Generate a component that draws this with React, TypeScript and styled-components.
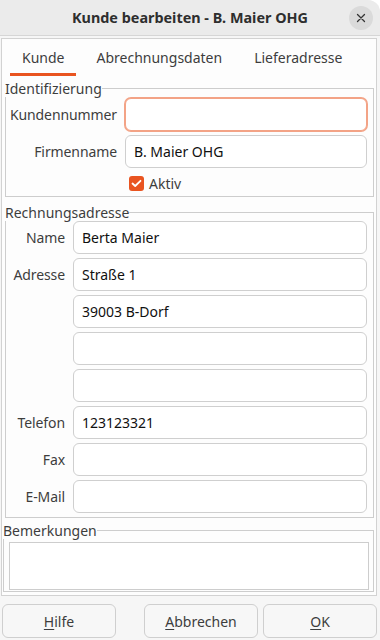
import styled, { createGlobalStyle } from "styled-components";

const GlobalStyle = createGlobalStyle`
  html, body {
    margin: 0;
    padding: 0;
    background: #ffffff;
  }
  body {
    font-family: "Noto Sans", "DejaVu Sans", sans-serif;
    font-size: 14px;
    color: #3d3d3d;
  }
  * {
    box-sizing: border-box;
  }
`;

const Window = styled.div`
  width: 380px;
  height: 640px;
  display: flex;
  flex-direction: column;
  background-color: #f6f6f6;
  border-top-right-radius: 12px;
  overflow: hidden;
`;

const TitleBar = styled.div`
  height: 36px;
  flex-shrink: 0;
  display: grid;
  grid-template-columns: 36px 1fr 36px;
  align-items: center;
  background-color: #ebebeb;
  border-bottom: 1px solid #d6d6d6;
`;

const Title = styled.div`
  grid-column: 2;
  text-align: center;
  font-weight: bold;
  font-size: 14.4px;
  color: #2e2e2e;
`;

const CloseButton = styled.button`
  width: 24px;
  height: 24px;
  padding: 0;
  margin-right: 7px;
  border: none;
  border-radius: 50%;
  background-color: #dadada;
  display: flex;
  align-items: center;
  justify-content: center;
  justify-self: end;
`;

const Body = styled.div`
  flex: 1;
  display: flex;
  flex-direction: column;
  padding: 2px 3px 2px 1px;
`;

const Notebook = styled.div`
  flex: 1;
  display: flex;
  flex-direction: column;
  background-color: #fdfdfd;
  border: 1px solid #d2d2d2;
`;

const TabBar = styled.div`
  height: 37px;
  display: flex;
  gap: 8px;
  padding-left: 8px;
`;

const Tab = styled.div<{ $active?: boolean }>`
  padding: 0 12px;
  display: flex;
  align-items: center;
  color: #3d3d3d;
  border-bottom: 3px solid ${(p) => (p.$active ? "#e95420" : "transparent")};
  padding-top: 3px;
`;

const Page = styled.div`
  flex: 1;
  display: flex;
  flex-direction: column;
  padding: 4px 2px 1px 1px;
`;

const Frame = styled.div<{ $inset: number; $gap: number }>`
  margin-left: ${(p) => p.$inset}px;
  margin-top: ${(p) => p.$gap}px;
  display: flex;
  flex-direction: column;
`;

const FrameHead = styled.div`
  display: flex;
`;

const FrameTitle = styled.span`
  line-height: 17px;
  color: #3d3d3d;
`;

const HeadRule = styled.div`
  flex: 1;
  margin-top: 8px;
  border-top: 1px solid #cdcdcd;
  border-right: 1px solid #cdcdcd;
`;

const FrameBody = styled.div<{ $pad: string }>`
  border: 1px solid #cdcdcd;
  border-top: none;
  padding: ${(p) => p.$pad};
`;

const FormGrid = styled.div<{ $labelWidth: number }>`
  display: grid;
  grid-template-columns: ${(p) => p.$labelWidth}px 1fr;
  column-gap: 8px;
  row-gap: 4px;
  align-items: center;
`;

const Label = styled.label`
  text-align: right;
  color: #3d3d3d;
  white-space: nowrap;
  letter-spacing: -0.1px;
`;

const Input = styled.input<{ $focused?: boolean }>`
  grid-column: 2;
  height: 33px;
  width: 100%;
  padding: 0 8px;
  font-family: inherit;
  font-size: 14px;
  color: #101010;
  background-color: #ffffff;
  border: 1px solid ${(p) => (p.$focused ? "#f3a386" : "#cfcfcf")};
  box-shadow: ${(p) => (p.$focused ? "0 0 0 1px #f3a386" : "none")};
  border-radius: 6px;
  outline: none;
`;

const CheckRow = styled.div`
  grid-column: 2;
  height: 22px;
  display: flex;
  align-items: center;
  gap: 5px;
  padding-left: 4px;
`;

const CheckBox = styled.span`
  width: 15px;
  height: 15px;
  border-radius: 3px;
  background-color: #e95420;
  display: flex;
  align-items: center;
  justify-content: center;
`;

const TextArea = styled.div`
  height: 48px;
  background-color: #ffffff;
  border: 1px solid #cdcdcd;
`;

const ButtonBar = styled.div`
  height: 34px;
  display: flex;
  gap: 5px;
  margin-top: 8px;
  margin-left: 1px;
`;

const Button = styled.button<{ $pushRight?: boolean }>`
  width: 114px;
  height: 34px;
  margin-left: ${(p) => (p.$pushRight ? "auto" : "0")};
  font-family: inherit;
  font-size: 14px;
  color: #3d3d3d;
  background-color: #f7f7f7;
  border: 1px solid #cfcfcf;
  border-radius: 6px;
  u {
    text-decoration-thickness: 1px;
    text-underline-offset: 2px;
  }
`;

const billingRows = [
  { label: "Name", value: "Berta Maier" },
  { label: "Adresse", value: "Straße 1" },
  { label: "", value: "39003 B-Dorf" },
  { label: "", value: "" },
  { label: "", value: "" },
  { label: "Telefon", value: "123123321" },
  { label: "Fax", value: "" },
  { label: "E-Mail", value: "" },
];

function App() {
  return (
    <>
      <GlobalStyle />
      <Window>
        <TitleBar>
          <Title>Kunde bearbeiten - B. Maier OHG</Title>
          <CloseButton aria-label="Schließen">
            <svg width="10" height="10" viewBox="0 0 10 10">
              <path
                d="M1.5 1.5 L8.5 8.5 M8.5 1.5 L1.5 8.5"
                stroke="#333"
                strokeWidth="1.3"
                strokeLinecap="round"
              />
            </svg>
          </CloseButton>
        </TitleBar>
        <Body>
          <Notebook>
            <TabBar>
              <Tab $active>Kunde</Tab>
              <Tab>Abrechnungsdaten</Tab>
              <Tab>Lieferadresse</Tab>
            </TabBar>
            <Page>
              <Frame $inset={2} $gap={0}>
                <FrameHead>
                  <FrameTitle>Identifizierung</FrameTitle>
                  <HeadRule />
                </FrameHead>
                <FrameBody $pad="1px 6px 2px 0">
                  <FormGrid $labelWidth={111}>
                    <Label>Kundennummer</Label>
                    <Input $focused defaultValue="" />
                    <Label>Firmenname</Label>
                    <Input defaultValue="B. Maier OHG" />
                    <CheckRow>
                      <CheckBox>
                        <svg width="11" height="9" viewBox="0 0 11 9">
                          <path
                            d="M1.5 4.5 L4.2 7 L9.5 1.8"
                            fill="none"
                            stroke="#fff"
                            strokeWidth="1.8"
                            strokeLinecap="round"
                            strokeLinejoin="round"
                          />
                        </svg>
                      </CheckBox>
                      <span>Aktiv</span>
                    </CheckRow>
                  </FormGrid>
                </FrameBody>
              </Frame>
              <Frame $inset={2} $gap={7}>
                <FrameHead>
                  <FrameTitle>Rechnungsadresse</FrameTitle>
                  <HeadRule />
                </FrameHead>
                <FrameBody $pad="0 6px 4px 0">
                  <FormGrid $labelWidth={59}>
                    {billingRows.map((row, i) => (
                      <>
                        {row.label ? <Label key={"l" + i}>{row.label}</Label> : null}
                        <Input key={"i" + i} defaultValue={row.value} />
                      </>
                    ))}
                  </FormGrid>
                </FrameBody>
              </Frame>
              <Frame $inset={0} $gap={4}>
                <FrameHead>
                  <FrameTitle>Bemerkungen</FrameTitle>
                  <HeadRule />
                </FrameHead>
                <FrameBody $pad="3px 4px 1px 5px">
                  <TextArea />
                </FrameBody>
              </Frame>
            </Page>
          </Notebook>
          <ButtonBar>
            <Button>
              <u>H</u>ilfe
            </Button>
            <Button $pushRight>
              <u>A</u>bbrechen
            </Button>
            <Button>
              <u>O</u>K
            </Button>
          </ButtonBar>
        </Body>
      </Window>
    </>
  );
}

export default App;
